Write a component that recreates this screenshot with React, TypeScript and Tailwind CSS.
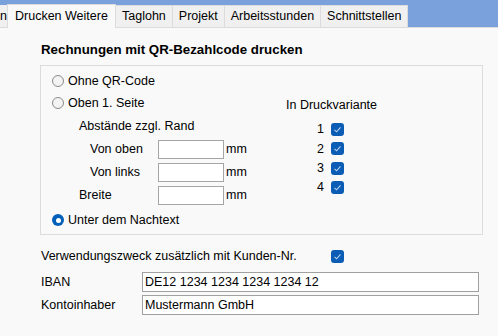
import React from 'react';

const Radio: React.FC<{ checked?: boolean }> = ({ checked }) =>
  checked ? (
    <span className="w-[12px] h-[12px] rounded-full bg-[#005fb8] flex items-center justify-center shrink-0">
      <span className="w-[5px] h-[5px] rounded-full bg-white" />
    </span>
  ) : (
    <span className="w-[12px] h-[12px] rounded-full border border-[#8a8a8a] bg-[#f3f3f3] shrink-0" />
  );

const Check: React.FC = () => (
  <span className="w-[13px] h-[13px] rounded-[3px] bg-[#0b5cb5] flex items-center justify-center shrink-0">
    <svg width="9" height="9" viewBox="0 0 9 9" fill="none">
      <path d="M1.5 4.8 L3.6 6.8 L7.5 2.4" stroke="#b9d3f0" strokeWidth="1.1" />
    </svg>
  </span>
);

const Tab: React.FC<{ label: string }> = ({ label }) => (
  <div className="h-[22px] px-[6px] bg-[#f0f0f0] border border-b-0 border-[#dcdcdc] -ml-px flex items-center">
    {label}
  </div>
);

const MmInput: React.FC<{ label: string; indent?: boolean }> = ({ label, indent }) => (
  <div className="h-[23px] flex items-center">
    <span className={`${indent ? 'w-[106px] pl-[38px]' : 'w-[106px] pl-[27px]'}`}>{label}</span>
    <span className="w-[66px] h-[19px] bg-white border border-[#a5a5a5]" />
    <span className="ml-[2px]">mm</span>
  </div>
);

const Field: React.FC<{ label: string; value: string }> = ({ label, value }) => (
  <div className="flex items-center h-[20px]">
    <span className="w-[101px]">{label}</span>
    <div className="w-[337px] h-[20px] bg-white border border-[#a0a0a0] px-[2px] flex items-center">{value}</div>
  </div>
);

export default function App() {
  return (
    <div className="w-[498px] h-[336px] bg-[#f9f9f9] font-['Liberation_Sans',sans-serif] text-[12.5px] text-black overflow-hidden">
      <div className="h-[28px] bg-[#7aa1dc] border-b border-[#dcdcdc] flex items-end">
        <div className="w-[8px] h-[22px] bg-[#f0f0f0] border-r border-[#dcdcdc] overflow-hidden flex items-center justify-end">n</div>
        <div className="h-[24px] w-[109px] -mb-px bg-[#f9f9f9] border border-b-0 border-[#dcdcdc] -ml-px pl-[7px] flex items-center">
          Drucken Weitere
        </div>
        <Tab label="Taglohn" />
        <Tab label="Projekt" />
        <Tab label="Arbeitsstunden" />
        <Tab label="Schnittstellen" />
      </div>

      <div className="pl-[41px] pt-[12px] h-[20px] flex items-center box-content font-bold text-[13.3px]">
        Rechnungen mit QR-Bezahlcode drucken
      </div>

      <div className="ml-[40px] mt-[5px] w-[443px] h-[170px] border border-[#dcdcdc] flex">
        <div className="w-[234px] pl-[11px] pt-[4px]">
          <div className="h-[22px] flex items-center gap-[4px]">
            <Radio />
            <span>Ohne QR-Code</span>
          </div>
          <div className="h-[22px] flex items-center gap-[4px]">
            <Radio />
            <span>Oben 1. Seite</span>
          </div>
          <div className="h-[24px] flex items-center pl-[27px]">Abstände zzgl. Rand</div>
          <MmInput label="Von oben" indent />
          <MmInput label="Von links" indent />
          <MmInput label="Breite" />
          <div className="mt-[2px] h-[22px] flex items-center gap-[4px]">
            <Radio checked />
            <span>Unter dem Nachtext</span>
          </div>
        </div>
        <div className="pl-[11px] pt-[29px]">
          <div className="h-[20px] flex items-center">In Druckvariante</div>
          <div className="mt-[5px]">
            {['1', '2', '3', '4'].map(n => (
              <div key={n} className="h-[19.3px] flex items-center">
                <span className="w-[38px] text-right">{n}</span>
                <span className="ml-[7px]"><Check /></span>
              </div>
            ))}
          </div>
        </div>
      </div>

      <div className="pl-[41px] mt-[11px] h-[20px] flex items-center">
        <span className="w-[290px]">Verwendungszweck zusätzlich mit Kunden-Nr.</span>
        <Check />
      </div>

      <div className="pl-[41px] mt-[6px] flex flex-col gap-[3px]">
        <Field label="IBAN" value="DE12 1234 1234 1234 1234 12" />
        <Field label="Kontoinhaber" value="Mustermann GmbH" />
      </div>
    </div>
  );
}
